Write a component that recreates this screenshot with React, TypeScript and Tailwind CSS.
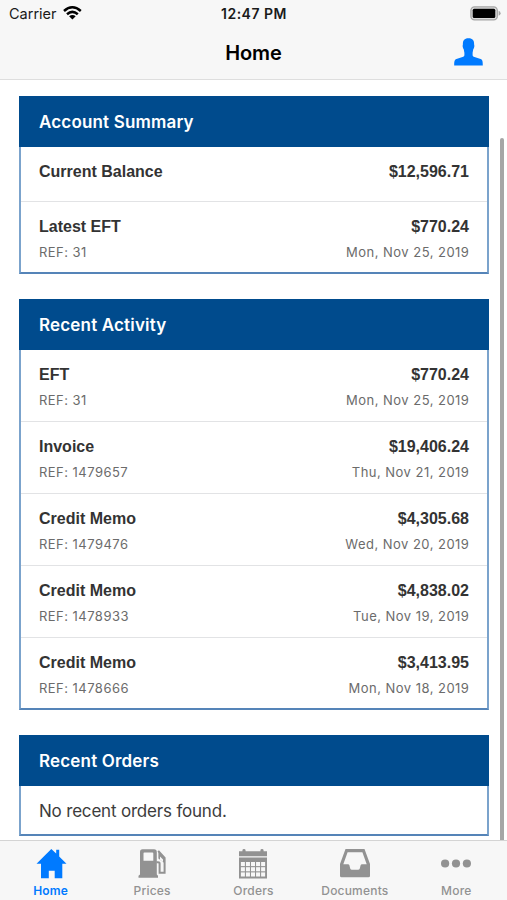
import React from "react";

type Entry = { title: string; amount: string; refNo?: string; date?: string };

const summary: Entry[] = [
  { title: "Current Balance", amount: "$12,596.71" },
  { title: "Latest EFT", amount: "$770.24", refNo: "REF: 31", date: "Mon, Nov 25, 2019" },
];

const activity: Entry[] = [
  { title: "EFT", amount: "$770.24", refNo: "REF: 31", date: "Mon, Nov 25, 2019" },
  { title: "Invoice", amount: "$19,406.24", refNo: "REF: 1479657", date: "Thu, Nov 21, 2019" },
  { title: "Credit Memo", amount: "$4,305.68", refNo: "REF: 1479476", date: "Wed, Nov 20, 2019" },
  { title: "Credit Memo", amount: "$4,838.02", refNo: "REF: 1478933", date: "Tue, Nov 19, 2019" },
  { title: "Credit Memo", amount: "$3,413.95", refNo: "REF: 1478666", date: "Mon, Nov 18, 2019" },
];

function Card({ title, children }: { title: string; children: React.ReactNode }) {
  return (
    <section className="border-2 border-t-0 border-[#7ba3cc] border-b-[#5584b8] bg-white">
      <h2 className="-mx-[2px] flex h-[51px] items-center bg-[#004b8d] pt-[2px] pr-5 pl-[20px] text-[17px] font-semibold tracking-[0.17px] text-white">
        {title}
      </h2>
      {children}
    </section>
  );
}

function Row({ entry }: { entry: Entry }) {
  return (
    <li className="group border-b border-[#e2e3e5] px-[18px] pt-[15px] last:-mb-px last:border-b-0">
      <div className="flex justify-between font-['Liberation_Sans',Arial,sans-serif] text-[16px] leading-5 font-bold text-[#333]">
        <span>{entry.title}</span>
        <span>{entry.amount}</span>
      </div>
      {entry.refNo ? (
        <div className="flex h-9 items-start justify-between pt-[5px] text-[13px] leading-5 tracking-[0.47px] text-[#6b6b6b]">
          <span>{entry.refNo}</span>
          <span className="-mr-[0.4px]">{entry.date}</span>
        </div>
      ) : (
        <div className="h-[19px]" />
      )}
    </li>
  );
}

function HomeIcon() {
  return (
    <svg width="32" height="30" viewBox="0 0 32 30" fill="currentColor">
      <path d="M16.3 0 21.2 4.6V.8H24.2V7.5L31.5 14.7H27.3V29.2H19.7V21.7H13.8V29.2H6V14.7H1.5Z" />
    </svg>
  );
}

function PumpIcon() {
  return (
    <svg width="28" height="30" viewBox="0 0 28 30" fill="currentColor">
      <path fillRule="evenodd" d="M4.5 .3H16Q18.8.3 18.8 3V25.5L20 26.7V28.8H.5V26.7L2 25.5V3Q2 .3 4.5 .3ZM6.3 3.6Q5.5 3.6 5.5 4.5V11.7H15.3V4.5Q15.3 3.6 14.5 3.6Z" />
      <path d="M20.2 1.8 26.6 9V23.7H21.6V14.6Q21.6 13.3 20 13.3H18.3" fill="none" stroke="currentColor" strokeWidth="2" />
      <path d="M20.4 2.5 27 10V14.5L20.4 9.4Z" />
      <path d="M22 7.5 25 10.4V13L22 10.7Z" fill="#f7f7f7" />
    </svg>
  );
}

function CalendarIcon() {
  return (
    <svg width="28" height="30" viewBox="0 0 28 30" fill="currentColor">
      <path d="M0 2.3H3.4V1.4Q3.4 0 5 0T6.6 1.4V2.3H21.4V1.4Q21.4 0 23 0T24.6 1.4V2.3H28V7.2H0ZM0 8.6H28V29.5H0Z" />
      <g fill="#f7f7f7">
        {[13, 18.2, 23.4].map((y) =>
          [1.9, 6.95, 12, 17.05, 22.1].map((x) => <rect key={`${y}-${x}`} x={x} y={y} width="4" height="4.1" />)
        )}
      </g>
    </svg>
  );
}

function TrayIcon() {
  return (
    <svg width="30" height="29" viewBox="0 0 30 29" fill="currentColor">
      <path fillRule="evenodd" d="M5.5 0H24.5L30 15V26.8Q30 28.3 28.5 28.3H1.5Q0 28.3 0 26.8V15ZM7.6 3.3 3.3 15.3H8Q9 15.3 9.4 16.3L10.2 19.5Q10.6 20.8 12 20.8H18Q19.4 20.8 19.8 19.5L20.6 16.3Q21 15.3 22 15.3H26.7L22.4 3.3Z" />
    </svg>
  );
}

function MoreIcon() {
  return (
    <svg width="30" height="9" viewBox="0 0 30 9" fill="currentColor">
      <circle cx="4.1" cy="4.5" r="4.1" />
      <circle cx="15" cy="4.5" r="4.1" />
      <circle cx="25.9" cy="4.5" r="4.1" />
    </svg>
  );
}

const tabs = [
  { label: "Home", icon: <HomeIcon />, active: true },
  { label: "Prices", icon: <PumpIcon /> },
  { label: "Orders", icon: <CalendarIcon /> },
  { label: "Documents", icon: <TrayIcon /> },
  { label: "More", icon: <MoreIcon /> },
];

export default function App() {
  return (
    <div className="relative flex h-[900px] w-[507px] flex-col overflow-hidden bg-white font-[Inter,sans-serif]">
      <header className="h-20 shrink-0 border-b border-[#dedede] bg-[#f7f7f7]">
        <div className="grid h-7 grid-cols-3 items-center pr-[6px] pl-[9px] text-[14px] leading-5 text-[#1a1a1a]">
          <div className="flex items-center gap-[6px]">
            <span className="text-[14.5px]">Carrier</span>
            <svg className="-mt-[2px]" width="19" height="14" viewBox="0 0 19 14" fill="none" stroke="#000" strokeWidth="2.5">
              <path d="M1 5Q9.3-2.4 17.8 5M4 8.3Q9.3 3.5 14.8 8.3" />
              <path d="M9.4 13.6 6.1 10.3Q9.4 7.5 12.7 10.3Z" fill="#000" stroke="none" />
            </svg>
          </div>
          <span className="-ml-[2px] text-center font-semibold tracking-[0.5px]">12:47 PM</span>
          <svg className="-mt-[2px] justify-self-end" width="31" height="15" viewBox="0 0 31 15">
            <rect x=".9" y=".9" width="26.4" height="13" rx="3.6" fill="#dcdcdc" stroke="#a5a5a5" strokeWidth="1.3" />
            <rect x="2.7" y="2.7" width="22.6" height="9.4" rx="1.5" fill="#000" />
            <path d="M28.6 4.8Q30.6 5.6 30.6 7.3T28.6 9.8Z" fill="#a5a5a5" />
          </svg>
        </div>
        <div className="grid h-12 grid-cols-3 items-center px-6">
          <h1 className="col-start-2 pt-[2px] text-center text-[20px] font-semibold tracking-[-0.1px] text-black">Home</h1>
          <svg className="justify-self-end" width="29" height="28" viewBox="0 0 29 28" fill="#007aff">
            <path d="M14.5.2C18.8.2 20.3 2.7 20.1 6.2C20.7 8 20.2 10 19.2 11.4C19 13 18.7 13.9 18.6 14.8V17C18.6 18 19.3 18.6 20.5 19L26.6 21.1C28.5 21.9 28.8 23.3 28.8 27.6H.2C.2 23.3.5 21.9 2.4 21.1L8.5 19C9.7 18.6 10.4 18 10.4 17V14.8C10.3 13.9 10 13 9.8 11.4C8.8 10 8.3 8 8.9 6.2C8.7 2.7 10.2.2 14.5.2Z" />
          </svg>
        </div>
      </header>

      <main className="flex min-h-0 flex-1 flex-col gap-[25px] pt-4 pr-[18px] pl-[19px]">
        <Card title="Account Summary">
          <ul className="flex flex-col">{summary.map((e) => <Row key={e.title} entry={e} />)}</ul>
        </Card>
        <Card title="Recent Activity">
          <ul className="flex flex-col">{activity.map((e) => <Row key={e.refNo} entry={e} />)}</ul>
        </Card>
        <Card title="Recent Orders">
          <p className="flex h-12 items-center px-[18px] pt-[3px] text-[17px] tracking-[-0.19px] text-[#3c3c3c]">No recent orders found.</p>
        </Card>
      </main>

      <div className="absolute top-[138px] right-[3.5px] h-[702px] w-[4px] rounded-t-full bg-[#a6a6a6]" />

      <nav className="relative grid h-[60px] shrink-0 grid-cols-5 border-t border-[#d4d4d4] bg-[#f7f7f7]">
        {tabs.map((t) => (
          <div key={t.label} className={t.active ? "flex flex-col items-center text-[#007aff]" : "flex flex-col items-center text-[#929292]"}>
            <div className="flex h-[45px] items-center">{t.icon}</div>
            <span className={t.active ? "-mt-[2px] text-[12px] leading-[14px] font-semibold tracking-[0.2px]" : "-mt-[2px] text-[12px] leading-[14px] font-medium tracking-[0.2px]"}>{t.label}</span>
          </div>
        ))}
      </nav>
    </div>
  );
}
